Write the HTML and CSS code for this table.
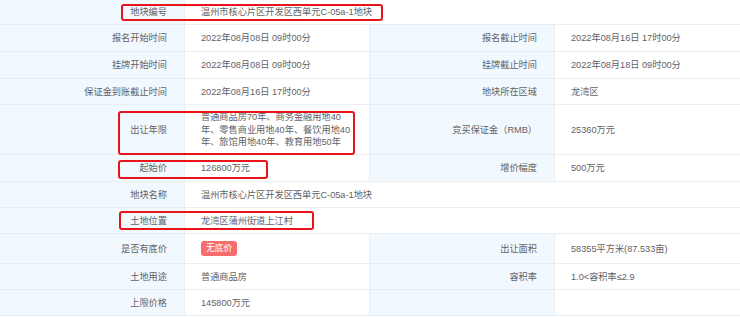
FILE: index.html
```
<!DOCTYPE html>
<html lang="zh-CN">
<head>
<meta charset="utf-8">
<title>地块信息</title>
<link rel="stylesheet" href="styles.css">
</head>
<body>
<div class="sheet">
  <div class="grid">
    <div class="cell label r1">地块编号</div>
    <div class="cell value span3 r1">温州市核心片区开发区西单元C-05a-1地块</div>

    <div class="cell label">报名开始时间</div>
    <div class="cell value">2022年08月08日 09时00分</div>
    <div class="cell label">报名截止时间</div>
    <div class="cell value last">2022年08月16日 17时00分</div>

    <div class="cell label">挂牌开始时间</div>
    <div class="cell value">2022年08月08日 09时00分</div>
    <div class="cell label">挂牌截止时间</div>
    <div class="cell value last">2022年08月18日 09时00分</div>

    <div class="cell label">保证金到账截止时间</div>
    <div class="cell value">2022年08月16日 17时00分</div>
    <div class="cell label">地块所在区域</div>
    <div class="cell value last">龙湾区</div>

    <div class="cell label">出让年限</div>
    <div class="cell value multi">普通商品房70年、商务金融用地40<br>年、零售商业用地40年、餐饮用地40<br>年、旅馆用地40年、教育用地50年</div>
    <div class="cell label">竞买保证金（RMB）</div>
    <div class="cell value last">25360万元</div>

    <div class="cell label">起始价</div>
    <div class="cell value">126800万元</div>
    <div class="cell label">增价幅度</div>
    <div class="cell value last">500万元</div>

    <div class="cell label">地块名称</div>
    <div class="cell value span3">温州市核心片区开发区西单元C-05a-1地块</div>

    <div class="cell label">土地位置</div>
    <div class="cell value span3">龙湾区蒲州街道上江村</div>

    <div class="cell label">是否有底价</div>
    <div class="cell value"><span class="badge">无底价</span></div>
    <div class="cell label">出让面积</div>
    <div class="cell value last">58355平方米(87.533亩)</div>

    <div class="cell label">土地用途</div>
    <div class="cell value">普通商品房</div>
    <div class="cell label">容积率</div>
    <div class="cell value last">1.0&lt;容积率≤2.9</div>

    <div class="cell label">上限价格</div>
    <div class="cell value">145800万元</div>
    <div class="cell label"></div>
    <div class="cell value last"></div>
  </div>

  <div class="mark m1"></div>
  <div class="mark m2"></div>
  <div class="mark m3"></div>
  <div class="mark m4"></div>
</div>
</body>
</html>
```

FILE: styles.css
```
* {
  box-sizing: border-box;
}

html, body {
  margin: 0;
  padding: 0;
  background: #ffffff;
}

body {
  font-family: "Liberation Sans", "Noto Sans CJK SC", sans-serif;
  font-size: 9.2px;
  color: #5f6266;
}

.sheet {
  position: relative;
  width: 740px;
}

.grid {
  display: grid;
  grid-template-columns: 185px 185px 185px 185px;
  grid-template-rows: 25px 27px 27px 26px 50px 27px 26px 26px 30px 26px 26px;
}

.cell {
  display: flex;
  align-items: center;
  border-bottom: 1px solid #e9eef2;
  border-right: 1px solid #eaf0f4;
  line-height: 14px;
  white-space: nowrap;
}

.label {
  justify-content: flex-end;
  padding: 0 17px 0 8px;
  background: #f2f9fe;
}

.value {
  padding: 0 16px;
  background: #ffffff;
}

.value.last,
.value.span3 {
  border-right: none;
}

.span3 {
  grid-column: span 3;
}

.multi {
  line-height: 12.5px;
  padding-top: 1px;
}

.badge {
  display: inline-block;
  height: 15px;
  line-height: 15px;
  padding: 0 5px;
  border-radius: 3px;
  background: #f76d6d;
  color: #ffffff;
  font-size: 8.8px;
}

.mark {
  position: absolute;
  border: 2px solid #e8141c;
  border-radius: 3px;
  pointer-events: none;
}

.m1 { left: 121px; top: 4px; width: 262px; height: 17px; }
.m2 { left: 118px; top: 111px; width: 237px; height: 44px; }
.m3 { left: 118px; top: 160px; width: 150px; height: 19px; }
.m4 { left: 119px; top: 211px; width: 195px; height: 19px; }
```
